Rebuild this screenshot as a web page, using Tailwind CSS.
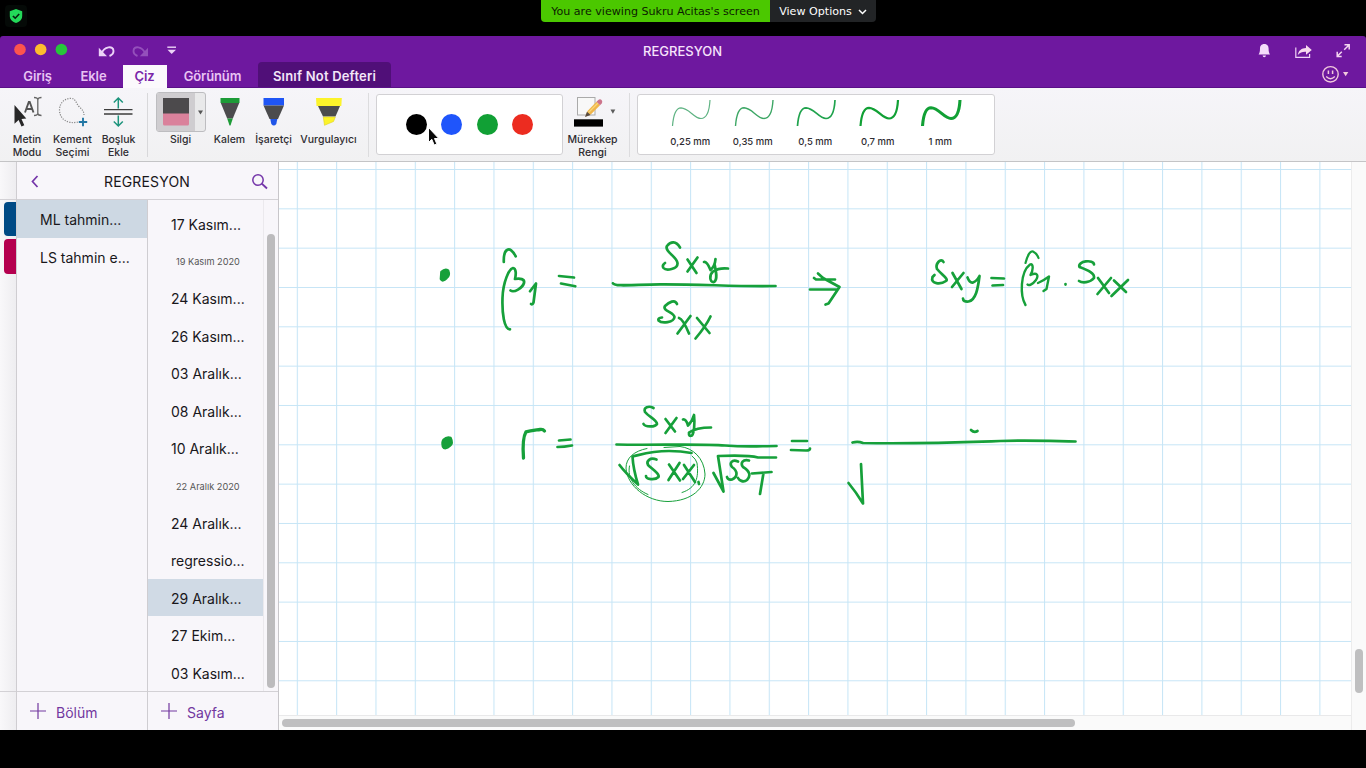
<!DOCTYPE html>
<html lang="tr">
<head>
<meta charset="utf-8">
<title>REGRESYON</title>
<script src="https://cdn.jsdelivr.net/npm/@tailwindcss/browser@4"></script>
</head>
<body class="bg-black">
<div class="relative flex h-[768px] w-[1366px] flex-col overflow-hidden bg-black font-['Inter','Liberation_Sans',sans-serif]">

  <!-- Meeting bar -->
  <header class="flex h-9 shrink-0 items-start">
    <div class="ml-[5px] mt-[5px] mr-[514px] flex h-[22px] w-[22px] items-center justify-center rounded bg-[#050a07]">
      <svg class="h-[14px] w-[14px]" viewBox="0 0 14 14"><path d="M7 0 L13.2 2.3 V7 C13.2 10.5 10.4 12.9 7 14 C3.6 12.9 .8 10.5 .8 7 V2.3 Z" fill="#23d959"/><path d="M3.9 7 L6.2 9.2 L10.2 5" fill="none" stroke="#06200e" stroke-width="1.6"/></svg>
    </div>
    <div class="flex h-[22px] w-[229px] items-center justify-center whitespace-nowrap rounded-bl bg-[#4bc800] pt-[2px] font-['DejaVu_Sans',sans-serif] text-[11.1px] text-[#0b1c02]"><span>You are viewing Sukru Acitas's screen</span></div>
    <div class="flex h-[22px] w-[106px] items-center justify-center gap-[6px] whitespace-nowrap rounded-br bg-[#222426] pt-[2px] font-['DejaVu_Sans',sans-serif] text-[11.1px] text-white"><span>View Options</span>
      <svg class="h-[6px] w-[9px]" viewBox="0 0 9 6"><path d="M1 1 L4.5 4.5 L8 1" fill="none" stroke="#fff" stroke-width="1.5"/></svg>
    </div>
  </header>

  <!-- Title and tabs -->
  <div class="flex h-[52px] shrink-0 flex-col rounded-t-[3px] border-b border-[#5a1088] bg-[#6e189f]">
    <div class="flex h-[26px] items-center">
      <svg class="h-[26px] w-[200px]" viewBox="0 36 200 26">
        <circle cx="20" cy="49.5" r="5.8" fill="#fc544e"/><circle cx="40.7" cy="49.5" r="5.8" fill="#fdbc2e"/><circle cx="61.4" cy="49.5" r="5.8" fill="#27c63b"/>
        <g fill="none" stroke="#ecd3f7" stroke-width="1.9"><path d="M101.500 53.500 C104 46.500 113.500 45 113.500 51 C113.500 53.500 112 55 109.500 56"/></g><path d="M98.800 47.800 V56.300 H107 Z" fill="#ecd3f7"/>
        <g fill="none" stroke="#9450bb" stroke-width="1.9"><path d="M145.300 53.500 C142.500 46.500 133.500 45 133.500 51 C133.500 53.500 135 55 137.500 56"/></g><path d="M148 47.800 V56.300 H139.800 Z" fill="#9450bb"/>
        <path d="M167.300 47.200 H176" stroke="#ecd3f7" stroke-width="1.4"/><path d="M167.500 49.700 H176 L171.700 54 Z" fill="#ecd3f7"/>
      </svg>
      <div class="w-[965px] pt-[3px] text-center text-[13px] leading-[26px] font-medium text-[#f6e3fb]">REGRESYON</div>
      <svg class="h-[26px] w-[120px] ml-auto" viewBox="1246 36 120 26">
        <path d="M1264.300 44 C1267.400 44 1268.600 46.200 1268.600 48.600 C1268.600 52 1269.200 53.300 1270 54.600 H1258.600 C1259.400 53.300 1260 52 1260 48.600 C1260 46.200 1261.200 44 1264.300 44 Z M1262.600 55.600 H1266 Q1265.800 57.300 1264.300 57.300 Q1262.800 57.300 1262.600 55.600 Z" fill="#f4dcfa"/>
        <path d="M1295.800 47.500 V57.400 H1309.600 V54" fill="none" stroke="#efd2f6" stroke-width="1.2"/>
        <path d="M1297.800 55 C1298.500 50.500 1301.500 48.200 1306 48 V45 L1311.800 50 L1306 54.800 V51.800 C1302.500 51.600 1300 52.500 1297.800 55 Z" fill="#f7d9ee"/>
        <g fill="none" stroke="#f4d6f0" stroke-width="1.5"><path d="M1344.500 44.700 H1349.200 V49.500 M1349 45 L1344.200 49.700"/><path d="M1341.700 56.400 H1337.200 V51.800 M1337.500 56 L1341.800 51.800"/></g>
      </svg>
    </div>
    <div class="flex h-[25px] items-stretch text-[13px] font-semibold leading-[28px] tracking-[-0.1px] text-[#e8c3f3]">
      <div class="ml-[13px] w-[49px] text-center">Giriş</div>
      <div class="w-[61px] pl-[2px] text-center">Ekle</div>
      <div class="mt-[3px] h-[24px] w-[44px] bg-[#fbf9fc] pr-px text-center leading-[22px] text-[#7a25a8]">Çiz</div>
      <div class="w-[91px] text-center">Görünüm</div>
      <div class="h-[25px] w-[133px] rounded-t bg-[#500f78] text-center tracking-[0.2px] text-[#f3e6f8]">Sınıf Not Defteri</div>
      <svg class="ml-auto h-[25px] w-[60px]" viewBox="1306 62 60 25">
        <g fill="none" stroke="#f2c9dc" stroke-width="1.4"><circle cx="1330.500" cy="74.300" r="7.700"/><path d="M1326.200 76.500 Q1330.500 80.800 1334.800 76.500"/></g><path d="M1328.400 70.500 V74 M1332.600 70.500 V74" stroke="#f2c9dc" stroke-width="1.500"/><path d="M1343 72 H1348.300 L1345.700 76.300 Z" fill="#f2c9dc"/>
      </svg>
    </div>
  </div>

  <!-- Ribbon -->
  <div class="flex h-[74px] shrink-0 items-start border-b border-[#c4c4c6] bg-gradient-to-b from-[#f6f5f9] to-[#f1f1f2] text-center text-[10.5px] font-medium leading-[12.5px] text-[#2f2d32]">
    <div class="ml-[5px] w-[44px] pt-[3px]">
      <svg class="mb-[2px] h-[41px] w-[44px]" viewBox="5 91 44 41"><path d="M14.500 105 V123.800 L18.600 120 L21.500 126.600 L24.300 125.300 L21.500 119 L26.300 118.500 Z" fill="#272727"/><path d="M25 112.500 L28.800 102 H29.700 L33.500 112.500 M26.300 109 H32.200" fill="none" stroke="#555" stroke-width="1.900"/><path d="M34 97.500 Q37.500 97.500 37.800 99.500 Q38.200 97.500 41.500 97.500 M34 115.500 Q37.500 115.500 37.800 113.500 Q38.200 115.500 41.500 115.500 M37.800 99 V114" fill="none" stroke="#666" stroke-width="1.300"/></svg>
      <div>Metin<br>Modu</div>
    </div>
    <div class="w-[47px] pt-[3px]">
      <svg class="mb-[2px] h-[41px] w-[47px]" viewBox="49 91 47 41"><path d="M78 122 C67 124.500 59.500 118.500 59.500 110 C59.500 102.500 65 98.300 71 98.300 C75.500 98.300 76 103 78.500 106 C81 108.500 84 110.500 84 115" fill="none" stroke="#888" stroke-width="1.200" stroke-dasharray="1.200 1.300"/><path d="M83 117.800 V126.200 M78.800 122 H87.200" stroke="#2277a4" stroke-width="1.900"/></svg>
      <div class="-mx-2 tracking-[0.1px]">Kement<br>Seçimi</div>
    </div>
    <div class="w-[45px] pt-[3px]">
      <svg class="mb-[2px] h-[41px] w-[45px]" viewBox="96 91 45 41"><path d="M104 109.700 H132.500 M104 114 H132.500" stroke="#3d3d3d" stroke-width="1.300"/><path d="M118.300 108.500 V98.500 M113.800 102.500 L118.300 98 L122.800 102.500 M118.300 115.500 V126 M113.800 121.500 L118.300 126 L122.800 121.500" fill="none" stroke="#1d947c" stroke-width="1.500"/></svg>
      <div>Boşluk<br>Ekle</div>
    </div>
    <div class="ml-[6px] mt-[5px] h-[64px] w-px bg-[#d8d8da]"></div>
    <div class="ml-[8px] mt-[4px] w-[50px]">
      <div class="flex h-[40px] w-[50px] overflow-hidden rounded-[3px] border border-[#bdbdc0] bg-[#e9e9ea]">
        <div class="flex w-[38px] items-center justify-center bg-[#cfcdd0]"><svg class="h-[28px] w-[26px]" viewBox="0 0 26 28"><path d="M0 0 H26 V16 H0 Z" fill="#4c4a4c"/><path d="M0 15.500 H26 V26 Q26 27.500 24.500 27.500 H1.500 Q0 27.500 0 26 Z" fill="#da819b"/></svg></div>
        <div class="flex w-[10px] items-center justify-center"><svg class="h-[5px] w-[5px]" viewBox="0 0 5 5"><path d="M0 .5 H5 L2.500 4.500 Z" fill="#555"/></svg></div>
      </div>
      <div class="mt-[2px] pr-px">Silgi</div>
    </div>
    <div class="ml-px w-[45px] pt-[3px]">
      <svg class="mb-[2px] h-[41px] w-[45px]" viewBox="207 91 45 41"><path d="M220.500 98 H239.500 V103 H220.500 Z" fill="#1d9b37"/><path d="M220.800 103 H239.200 L232.800 118.500 H227.200 Z" fill="#4b4b4d"/><path d="M227.200 118.500 H232.800 L230.500 125.500 H229.500 Z" fill="#1d9b37"/></svg>
      <div>Kalem</div>
    </div>
    <div class="w-[43px] pt-[3px]">
      <svg class="mb-[2px] h-[41px] w-[43px]" viewBox="252 91 43 41"><path d="M263.500 98 H284 V105.500 H263.500 Z" fill="#1f55f5"/><path d="M263.500 105.500 H284 L278 119 H269.500 Z" fill="#4b4b4d"/><path d="M270.300 119 H277.300 L276.300 124 Q273.800 127 271.300 124 Z" fill="#1f55e8"/></svg>
      <div class="-mx-2 whitespace-nowrap">İşaretçi</div>
    </div>
    <div class="w-[67px] pt-[3px]">
      <svg class="mb-[2px] h-[41px] w-[67px]" viewBox="295 91 67 41"><path d="M316 98 H341.800 L341.300 106 H316.500 Z" fill="#fcf32a"/><path d="M318 106 H340 L335.500 116.500 H323 Z" fill="#4b4b4d"/><path d="M323.300 117 H335.300 L333.500 121.500 L324.500 125.300 Z" fill="#fcf32a" stroke="#ded419" stroke-width=".6"/></svg>
      <div>Vurgulayıcı</div>
    </div>
    <div class="ml-[6px] mt-[5px] h-[64px] w-px bg-[#dcdcde]"></div>
    <div class="ml-[7px] mt-[6px] flex h-[61px] w-[187px] items-center justify-center gap-[14.3px] rounded-[3px] border-[1.5px] border-[#d2d1d4] bg-white">
      <div class="h-[21px] w-[21px] rounded-full bg-black"></div><div class="h-[21px] w-[21px] rounded-full bg-[#1f55fb]"></div><div class="h-[21px] w-[21px] rounded-full bg-[#11a035]"></div><div class="h-[21px] w-[21px] rounded-full bg-[#ec2c20]"></div>
    </div>
    <div class="ml-px w-[57px] pt-[3px]">
      <svg class="mb-[2px] h-[41px] w-[57px]" viewBox="564 91 57 41"><rect x="577.500" y="97.500" width="17.500" height="17.500" fill="#f8f8f8" stroke="#aaa"/><path d="M585.500 116.500 L587.500 111 L596.500 101.800 L600 105.300 L591 114.300 Z" fill="#f0b54a"/><path d="M588.500 112.500 L598 103" stroke="#f8d779" stroke-width="1.300"/><path d="M585 117 L587 111.800 L590.500 115 Z" fill="#594c42"/><path d="M596.500 101.800 L598.300 100 Q600 98.500 601.600 100 Q603 101.800 601.700 103.500 L600 105.300 Z" fill="#cc748b"/><rect x="574" y="119.300" width="29" height="7.300" fill="#000"/><path d="M610.500 109.500 H615.300 L612.900 113.800 Z" fill="#5c5c5c"/></svg>
      <div>Mürekkep<br>Rengi</div>
    </div>
    <div class="ml-[8px] mt-[5px] h-[64px] w-px bg-[#dcdcde]"></div>
    <div class="ml-[7px] mt-[6px] flex h-[61px] w-[358px] rounded-[3px] border-[1.5px] border-[#d2d1d4] bg-white pl-[21px] text-[9.5px] leading-[12px]">
      <div class="w-[62.5px]"><svg class="mb-px h-[40px] w-[62px]" viewBox="0 0 62 40"><path d="M13.500 31 C14.500 18 18 12.800 22 12.800 C30 13 35 23.500 42 23.500 C48.500 23.500 50.500 14 51 5" fill="none" stroke="#5fb383" stroke-width="1.200"/></svg><div>0,25 mm</div></div>
      <div class="w-[62.5px]"><svg class="mb-px h-[40px] w-[62px]" viewBox="0 0 62 40"><path d="M13.500 31 C14.500 18 18 12.800 22 12.800 C30 13 35 23.500 42 23.500 C48.500 23.500 50.500 14 51 5" fill="none" stroke="#3da765" stroke-width="1.400"/></svg><div>0,35 mm</div></div>
      <div class="w-[62.5px]"><svg class="mb-px h-[40px] w-[62px]" viewBox="0 0 62 40"><path d="M13.500 31 C14.500 18 18 12.800 22 12.800 C30 13 35 23.500 42 23.500 C48.500 23.500 50.500 14 51 5" fill="none" stroke="#20a34d" stroke-width="1.700"/></svg><div>0,5 mm</div></div>
      <div class="w-[62.5px]"><svg class="mb-px h-[40px] w-[62px]" viewBox="0 0 62 40"><path d="M13.500 31 C14.500 18 18 12.800 22 12.800 C30 13 35 23.500 42 23.500 C48.500 23.500 50.500 14 51 5" fill="none" stroke="#11a035" stroke-width="2.200"/></svg><div>0,7 mm</div></div>
      <div class="w-[62.5px]"><svg class="mb-px h-[40px] w-[62px]" viewBox="0 0 62 40"><path d="M13.500 31 C14.500 18 18 12.800 22 12.800 C30 13 35 23.500 42 23.500 C48.500 23.500 50.500 14 51 5" fill="none" stroke="#11a035" stroke-width="3.100"/></svg><div>1 mm</div></div>
    </div>
  </div>

  <!-- Workspace -->
  <main class="flex h-[568px] shrink-0 bg-[#f8f6fa] text-[14px] text-[#19171b]">
    <!-- Notebook colour strip -->
    <div class="flex w-[17px] flex-col border-r border-[#cfcdd1] bg-gradient-to-r from-[#f9f8fa] to-[#eeedf0]">
      <div class="h-[38px] border-b border-[#d3d1d5]"></div>
      <div class="ml-[4px] mt-[2px] h-[34px] rounded-l-[4px] bg-[#004a85]"></div>
      <div class="ml-[4px] mt-[3px] h-[35px] rounded-l-[4px] bg-[#b5004f]"></div>
      <div class="mt-auto h-[39px] border-t border-[#d3d1d5]"></div>
    </div>
    <div class="flex w-[262px] flex-col border-r border-[#c8c6ca]">
      <div class="flex h-[38px] shrink-0 items-center border-b border-[#d3d1d5]">
        <svg class="ml-[13px] mt-px h-[13px] w-[10px]" viewBox="0 0 10 13"><path d="M7.500 1 L2.500 6.500 L7.500 12" fill="none" stroke="#7435a9" stroke-width="1.700"/></svg>
        <div class="w-[211px] pl-[3px] pt-[2px] text-center tracking-[0.15px]">REGRESYON</div>
        <svg class="mt-px h-[17px] w-[18px]" viewBox="0 0 18 17"><circle cx="7" cy="7" r="5.200" fill="none" stroke="#7435a9" stroke-width="1.500"/><path d="M10.800 10.600 L16 15.500" stroke="#7435a9" stroke-width="1.900"/></svg>
      </div>
      <div class="flex h-[530px]">
        <section class="flex w-[131px] flex-col border-r border-[#cfcdd1]">
          <div class="h-[38px] bg-[#cdd8e3] pl-[23px] leading-[39px]">ML tahmin...</div>
          <div class="h-[37px] pl-[23px] leading-[40px]">LS tahmin e...</div>
          <div class="mt-auto flex h-[39px] items-center gap-[10px] border-t border-[#d3d1d5] pl-[13px] text-[#72389f]">
            <svg class="h-[16px] w-[16px]" viewBox="0 0 16 16"><path d="M8 0 V16 M0 8 H16" stroke="#72389f" stroke-width="1.200"/></svg><span class="pt-[2px]">Bölüm</span>
          </div>
        </section>
        <section class="flex w-[130px] flex-col">
          <div class="flex h-[491px]">
            <div class="w-[116px] border-r border-[#ebe9ed] pt-[4.5px] leading-[39px]">
              <div class="h-[37.45px] pl-[23px]">17 Kasım...</div>
              <div class="h-[37.45px] pl-[28px] text-[9.2px] text-[#555]">19 Kasım 2020</div>
              <div class="h-[37.45px] pl-[23px]">24 Kasım...</div>
              <div class="h-[37.45px] pl-[23px]">26 Kasım...</div>
              <div class="h-[37.45px] pl-[23px]">03 Aralık...</div>
              <div class="h-[37.45px] pl-[23px]">08 Aralık...</div>
              <div class="h-[37.45px] pl-[23px]">10 Aralık...</div>
              <div class="h-[37.45px] pl-[28px] text-[9.2px] text-[#555]">22 Aralık 2020</div>
              <div class="h-[37.45px] pl-[23px]">24 Aralık...</div>
              <div class="h-[37.45px] pl-[23px]">regressio...</div>
              <div class="h-[37.45px] bg-[#d0dae5] pl-[23px]">29 Aralık...</div>
              <div class="h-[37.45px] pl-[23px]">27 Ekim...</div>
              <div class="h-[37.45px] pl-[23px]">03 Kasım...</div>
            </div>
            <div class="ml-[3px] mt-[34px] h-[454px] w-[8px] rounded-full bg-[#bcbbbd]"></div>
          </div>
          <div class="flex h-[39px] items-center gap-[10px] border-t border-[#d3d1d5] pl-[13px] text-[#72389f]">
            <svg class="h-[16px] w-[16px]" viewBox="0 0 16 16"><path d="M8 0 V16 M0 8 H16" stroke="#72389f" stroke-width="1.200"/></svg><span class="pt-[2px]">Sayfa</span>
          </div>
        </section>
      </div>
    </div>

    <!-- Note page with pen ink -->
    <div class="flex w-[1072px] flex-col">
      <svg class="block h-[553px] w-[1072px] bg-white" viewBox="279 162 1072 553">
        <defs><pattern id="grid" x="296.800" y="169" width="39.330" height="39.330" patternUnits="userSpaceOnUse"><path d="M0 .5 H39.330 M.5 0 V39.330" stroke="#c6e5f6" stroke-width="1.100"/></pattern></defs>
        <rect x="279" y="162" width="1072" height="553" fill="url(#grid)"/>
        <g fill="none" stroke="#16a03a" stroke-width="2.700" stroke-linecap="round" stroke-linejoin="round">
          <!-- first line -->
          <path d="M441.500 272 Q445 268.500 448 270.500 Q450 275.500 446.500 278 Q442.500 282 441 279 Z" fill="#16a03a"/>
          <path d="M503.800 262 Q503.500 252 507 250 Q511 247.500 515.700 256.300"/>
          <path d="M510 329.300 C504 329 502 313 502.500 298 C503 282 509 269 513 268 C516.500 268.500 516 275 515 279 C520 278 525 279 524 283 C522.500 288 514 293 510.500 290.500"/>
          <path d="M530 291.300 L536 283.500 L533.500 302.500 Q532.500 305 531 304"/>
          <path d="M559 276 L574 277.500 M561 283.500 L575.300 286.300"/>
          <path d="M613 283.300 C615 287 635 284.500 660 284.300 C700 284 740 287 775.500 286"/>
          <path d="M680 247.500 C676 241 671 241 667 246 C664 251 677 257 677.500 263 C678 269.500 666 271 663.500 268 C662 266 663.500 264 665 263"/>
          <path d="M687.500 259.500 L696.500 273 M697.500 257.500 L687.500 271.500"/>
          <path d="M704 262 Q707 261.500 710.500 270 Q715 266 715.500 259 M714.500 264 C716 271 718 280 714 282 C709.500 282.500 709 275 713 271.500 Q719 267.500 728 268.500"/>
          <path d="M677 304 C675 299 669 302 665 306 C662 311 674 312 674.500 317 C674 322.500 662 324 658.500 320.500 Q657.500 318 662 317.500"/>
          <path d="M679 318 Q683 319 689 333.500 M690.500 316 L677.500 333.500 M697 318 L709.500 333 M710.500 316.500 Q706 326 695.500 338.500"/>
          <path d="M810 289.500 H838 M814 278 L816 279.500 L835 279.500 M818 273.500 L823 278 L839.500 287 L828.500 303.500 L825.500 304.500"/>
          <path d="M943.500 262 C941 257 935 264 937 269 C942 275 949 279 946 281 C941 284.500 930 284.500 932.500 277 L934.500 275"/>
          <path d="M952.500 273 L961.500 289 M963.500 273 L952 287 M967.500 277.500 Q970 283.500 973 282.500 Q977 281 979.500 276 C978 288 976 300 968.500 301.500 Q963 302 963 298.500"/>
          <path d="M991.500 278 L1004 278.500 M992.500 285.500 L1003 285"/>
          <path d="M1025.500 263 Q1029 250 1033 251.500 Q1037 253.500 1038.500 258" stroke-width="2.200"/>
          <path d="M1025.500 305 C1020 296 1020 272 1030 264.500 C1034 263 1033 271 1030.500 275 C1037 272 1039 275 1036 280 C1033 284 1029 286 1027.500 284.500 M1038 283 Q1043 281 1049 276.500 L1046.500 289 L1043.500 291" stroke-width="2.400"/>
          <path d="M1065.500 284 V284.600 M1094 264.500 C1094 259 1077 261 1079.500 267 C1087 270 1095 273 1094 278 C1090 283 1082 283 1079 281"/>
          <path d="M1098 278 L1109 293 M1111 278 L1097.500 294 M1114 280.500 L1126 292 M1128 280 L1111.500 296"/>
          <!-- second line -->
          <path d="M443.500 440 Q447 436.500 450.500 438 Q453 443 450 445.500 Q445 450 443 446.500 Q442 442 443.500 440 Z" fill="#16a03a"/>
          <path d="M523.500 458 C522.500 445 523 437 526 431.800 C531 430.500 537 430 540 429.500 Q543 429 544.500 431" stroke-width="3.300"/>
          <path d="M559 440.500 L570.500 439.500 M557.500 447 Q564 447 572 445.500"/>
          <path d="M616.500 444.500 C650 445.500 700 443.500 725 445.500 S760 446 776.500 446"/>
          <path d="M653.500 408 C649 405.500 643 407 645 412 C649 417 657 420 657 424 C655 427.500 645 427 643.500 424"/>
          <path d="M665.500 419 L675 431.500 M676.500 418 L665.500 433 M683 419.500 Q686 419 688 425.500 Q692.500 421 694 415 C695 424 694 433 692 435.500 Q688.500 437 689 432.500 Q696 427.500 711 427.500"/>
          <path d="M619.500 465 C624 471 632 479 638 484.500 C636 478 633 466 632.500 456.500 C640 455 650 451 669 451 Q681 451 691.500 453"/>
          <path d="M656.500 459.500 C650 457 646 461 648 465 C652 469 660 474 658.500 477 C655 480.500 646 479.500 646 476"/>
          <path d="M669 464.500 L680 480.500 M679.500 463 L668.500 480 M684 465 L695 482 M694 465 L683 479 M698.500 482 L699 484"/>
          <path d="M713.500 473 L723.500 491.500 L718 456 C731 455.500 749 455 758 457.500 H776"/>
          <path d="M738 461.500 C732 459 729 463 732 467 C738 471 738 477 732 479.500 Q728 480.500 727 477 M749 460.500 C743 459 740 463 743 467 C750 471 751 476 747 480 C743 483 739 480 738 478 M752 473.500 L771.500 472 M763.500 473 L760 494"/>
          <path d="M792 441 H807 M791 450 L806 450.500 Q810 450.500 810 448.500"/>
          <path d="M852.500 442.500 Q858 441 863 443 C920 444 970 442 1000 441 S1050 441 1075.500 441.500"/>
          <path d="M971 430 Q974 433 977.500 431"/>
          <path d="M861 464 L863 503.500 Q856 492 848.500 483"/>
          <path d="M647 448.500 C634 451 626 458 626 468 C627 486 647 501.500 668 501.500 C692 501 705 488 705 474 C704 458 693 448 680 446.500 L664 447.500 M648 494.500 C635 489 627 478 629.500 466 M682 492.500 C696 488 699 478 697 463 Q696 459 692 456" stroke-width="1"/>
        </g>
      </svg>
      <div class="flex h-[15px] items-center border-t border-[#e9e9ea] bg-[#fafafa] pl-[3px]"><div class="h-[8px] w-[793px] rounded-full bg-[#bfbfc0]"></div></div>
    </div>
    <div class="w-[15px] border-l border-[#ececec] bg-[#fafafa] pl-[3px] pt-[487px]"><div class="h-[44px] w-[8px] rounded-full bg-[#bfbfc0]"></div></div>
  </main>

  <!-- Mouse pointer -->
  <svg class="absolute left-[427px] top-[126px] h-[21px] w-[13px]" viewBox="0 0 13 21"><path d="M1.500 1.500 V16.500 L4.800 13.300 L7.200 19 L9.800 17.900 L7.500 12.500 H11.800 Z" fill="#080808" stroke="#fff" stroke-width="1"/></svg>
</div>
</body>
</html>
